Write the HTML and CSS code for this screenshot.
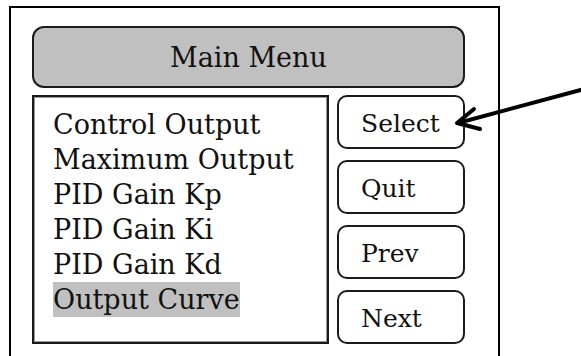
FILE: index.html
```html
<!DOCTYPE html>
<html lang="en">
  <head>
    <meta charset="UTF-8">
    <meta name="viewport" content="width=device-width, initial-scale=1.0">
    <title>Main Menu</title>
    <link rel="stylesheet" href="styles.css">
  </head>
  <body>
    <div class="screen">
      <div class="title-bar">Main Menu</div>
      <div class="panel">
        <ul class="menu-list">
          <li>Control Output</li>
          <li>Maximum Output</li>
          <li>PID Gain Kp</li>
          <li>PID Gain Ki</li>
          <li>PID Gain Kd</li>
          <li><span class="selected">Output Curve</span></li>
        </ul>
        <div class="buttons">
          <div class="btn">Select</div>
          <div class="btn">Quit</div>
          <div class="btn">Prev</div>
          <div class="btn">Next</div>
        </div>
      </div>
    </div>

    <!-- pointer to the Select button -->
    <svg class="pointer" width="581" height="356" viewBox="0 0 581 356">
      <g stroke="#000" stroke-width="4" stroke-linecap="round" fill="none">
        <line x1="584" y1="89" x2="458" y2="123" />
        <polyline points="474,109 457,123 480,129" stroke-linejoin="round" />
      </g>
    </svg>
  </body>
</html>
```

FILE: styles.css
```css
body {
  margin: 0;
  font-family: "DejaVu Serif", serif;
  color: #111;
  background: #fff;
  overflow: hidden;
}

.screen {
  width: 491px;
  height: 350px;
  margin: 6px 0 0 9px;
  padding: 18px 0 0 21px;
  border: 2px solid #000;
  border-bottom: 0;
  box-sizing: border-box;
}

.title-bar {
  width: 433px;
  height: 62px;
  box-sizing: border-box;
  border: 2px solid #1a1a1a;
  border-radius: 12px;
  background-color: #c0c0c0;
  font-size: 27px;
  display: flex;
  align-items: center;
  justify-content: center;
}

.panel {
  display: flex;
  gap: 8px;
  margin-top: 7px;
  height: 249px;
}

.menu-list {
  list-style: none;
  margin: 0;
  width: 297px;
  box-sizing: border-box;
  padding: 10px 0 0 19px;
  border: 2px solid #1a1a1a;
  box-shadow: inset 1px 1px 0 #999, inset -1px -1px 0 #999;
  font-size: 27px;
  line-height: 35px;
}

.selected {
  display: inline-block;
  background-color: #c0c0c0;
}

.buttons {
  width: 128px;
  display: flex;
  flex-direction: column;
  justify-content: space-between;
}

.btn {
  height: 54px;
  box-sizing: border-box;
  border: 2px solid #1a1a1a;
  border-radius: 10px;
  padding: 3px 0 0 22px;
  font-size: 25px;
  display: flex;
  align-items: center;
}

.pointer {
  position: absolute;
  left: 0;
  top: 0;
}
```
